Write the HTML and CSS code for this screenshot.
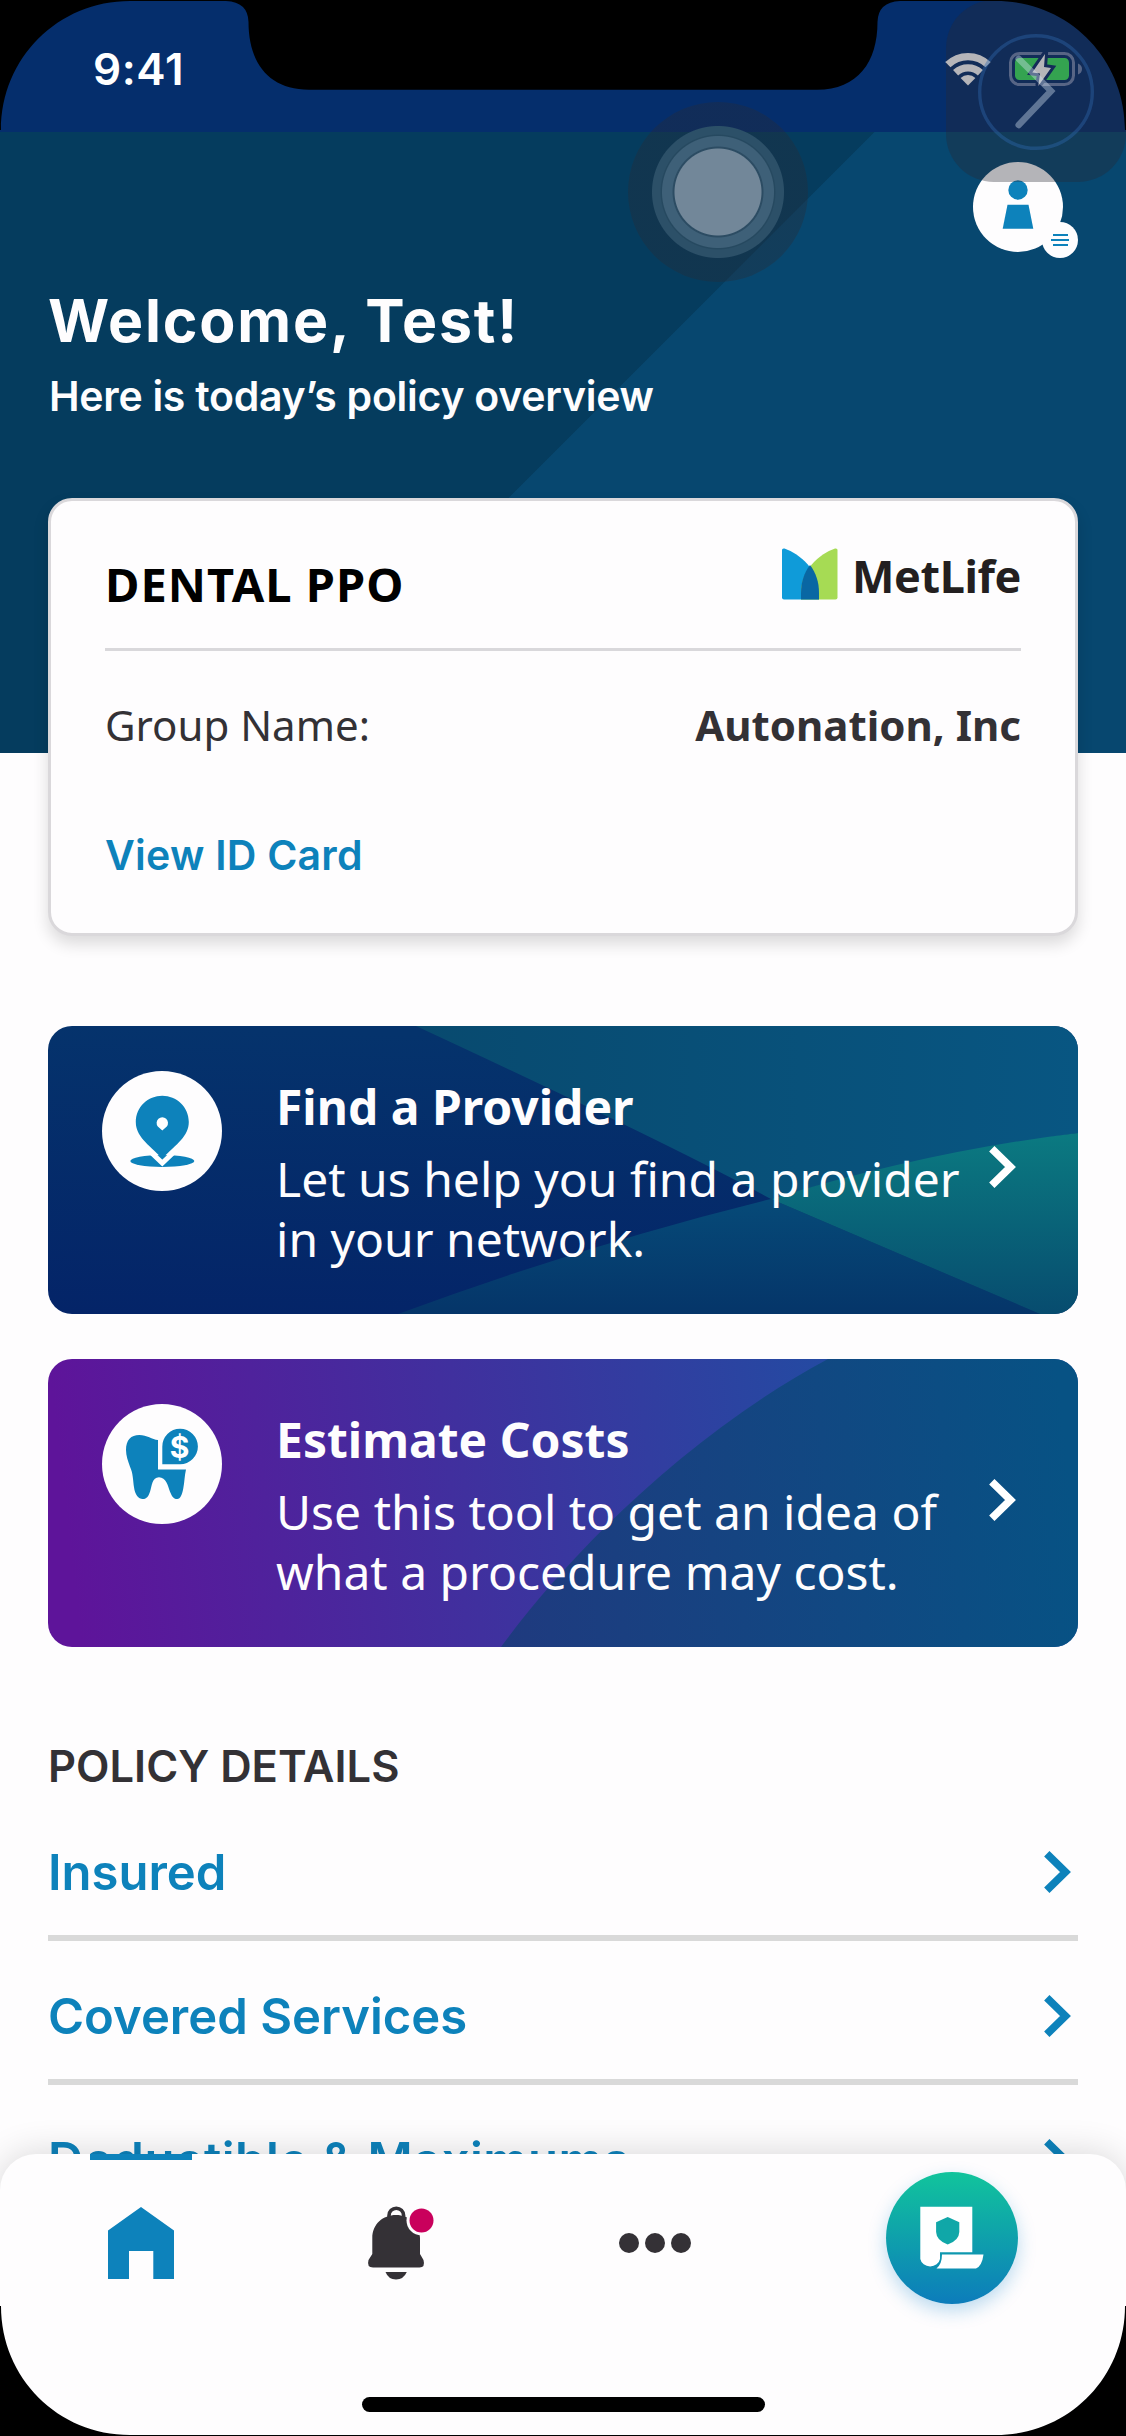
FILE: index.html
```html
<!DOCTYPE html>
<html lang="en">
<head>
  <meta charset="utf-8">
  <title>Policy overview</title>
  <link rel="stylesheet" href="styles.css">
</head>
<body>
  <div class="phone">
    <header class="status-bar">
      <span class="status-time">9:41</span>
      <div class="status-icons">
        <svg class="wifi" viewBox="0 0 46 34" width="46" height="34">
          <path d="M2.9 12.7A29 29 0 0 1 43.1 12.7M10.6 20.8A18 18 0 0 1 35.4 20.8" fill="none" stroke="#fff" stroke-width="7.4"/>
          <path d="M23 33.500L15.600 26A10.600 10.600 0 0 1 30.400 26Z" fill="#fff"/>
        </svg>
        <svg class="battery" viewBox="0 0 74 34" width="74" height="34">
          <rect x="1.500" y="1.500" width="63" height="31" rx="9" fill="none" stroke="#7085b0" stroke-width="3"/>
          <path d="M69 11.500q4 1.500 4 5.500t-4 5.500z" fill="#7085b0"/>
          <rect x="6" y="6" width="54" height="22" rx="4.500" fill="#3ae45f"/>
          <path d="M36 2L35 15L42 16L29.300 34L31 21.500L23.300 20.500Z" fill="#fff" stroke="#0a2d6b" stroke-width="6" paint-order="stroke"/>
        </svg>
      </div>
    </header>

    <main class="content">
      <div class="profile-row">
        <button class="avatar" aria-label="Profile">
          <svg viewBox="0 0 90 90" width="90" height="90">
            <circle cx="45" cy="28" r="9.700" fill="#0d82bb"/>
            <path d="M34.500 42.700H55.500L60.300 66.700H29.700Z" fill="#0d82bb"/>
          </svg>
          <span class="avatar-menu"><i></i><i class="wide"></i><i></i></span>
        </button>
      </div>
      <h1 class="welcome">Welcome, Test!</h1>
      <p class="subtitle">Here is today’s policy overview</p>

      <section class="policy-card">
        <div class="policy-head">
          <h2 class="plan-name">DENTAL PPO</h2>
          <div class="brand">
            <svg viewBox="0 0 56 52" width="56" height="52">
              <path d="M0 2Q0 0 2.500 0.500C18 6 37 22 37 45V51.500H2Q0 51.500 0 49.500Z" fill="#0f9bd9"/>
              <path d="M55.500 2Q55.500 0 53 0.500C37 6 19 22 19 45V51.500H53.500Q55.500 51.500 55.500 49.500Z" fill="#a6db54"/>
              <path d="M28 17C22 25 19 34 19 45V51.500H37V45C37 34 34 25 28 17Z" fill="#0967a3"/>
            </svg>
            <span>MetLife</span>
          </div>
        </div>
        <div class="group-row">
          <span>Group Name:</span>
          <strong>Autonation, Inc</strong>
        </div>
        <a class="id-link">View ID Card</a>
      </section>

      <section class="actions">
        <a class="action">
          <svg class="action-bg" viewBox="0 0 1030 288" width="1030" height="288">
            <defs>
              <linearGradient id="navy" x1="0" y1="1" x2="0.120" y2="0"><stop offset="0" stop-color="#042468"/><stop offset="1" stop-color="#05336c"/></linearGradient>
              <linearGradient id="sea" x1="0" y1="0" x2="1" y2="0"><stop offset="0" stop-color="#084a6f"/><stop offset="1" stop-color="#085682"/></linearGradient>
              <linearGradient id="deep" x1="0" y1="0" x2="0" y2="1"><stop offset="0" stop-color="#064a78"/><stop offset="1" stop-color="#053569"/></linearGradient>
              <linearGradient id="teal" x1="0" y1="0" x2="0" y2="1"><stop offset="0" stop-color="#0b7a81"/><stop offset="1" stop-color="#074c6f"/></linearGradient>
            </defs>
            <rect width="1030" height="288" fill="url(#navy)"/>
            <path d="M368 0H1030V107Q860 132 723 173Q620 117 368 0Z" fill="url(#sea)"/>
            <path d="M350 288Q540 218 723 173L992 288Z" fill="url(#deep)"/>
            <path d="M723 173Q880 125 1030 107V288H992Z" fill="url(#teal)"/>
          </svg>
          <span class="action-icon">
            <svg viewBox="0 0 120 120" width="120" height="120">
              <ellipse cx="60.300" cy="90" rx="32" ry="6" fill="#0d82bb"/>
              <path d="M60.300 24.800C74.500 24.800 86.800 36 86.800 51C86.800 65 75 73 60.300 87.300C45.500 73 33.800 65 33.800 51C33.800 36 46 24.800 60.300 24.800Z" fill="#0d82bb"/>
              <path d="M46 78.500L60.300 92L74.600 78.500" fill="none" stroke="#fff" stroke-width="5"/>
              <path d="M60.300 59.500L55.800 55.500A5.700 5.700 0 1 1 64.800 55.500Z" fill="#fff"/>
            </svg>
          </span>
          <span class="action-text">
            <strong>Find a Provider</strong>
            <span>Let us help you find a provider<br>in your network.</span>
          </span>
          <svg class="chevron" viewBox="0 0 28 42" width="28" height="42"><path d="M2.800 2.700L21.500 21L2.800 39.300" fill="none" stroke="#fff" stroke-width="7.600"/></svg>
        </a>
        <a class="action">
          <svg class="action-bg" viewBox="0 0 1030 288" width="1030" height="288">
            <defs>
              <linearGradient id="violet" gradientUnits="userSpaceOnUse" x1="0" y1="0" x2="780" y2="-90"><stop offset="0" stop-color="#5e149a"/><stop offset="1" stop-color="#234ba2"/></linearGradient>
              <linearGradient id="ocean" gradientUnits="userSpaceOnUse" x1="453" y1="260" x2="1030" y2="200"><stop offset="0" stop-color="#1f3a7f"/><stop offset="1" stop-color="#075284"/></linearGradient>
            </defs>
            <rect width="1030" height="288" fill="url(#violet)"/>
            <path d="M453 288C520 196 640 75 780 0H1030V288Z" fill="url(#ocean)"/>
          </svg>
          <span class="action-icon">
            <svg viewBox="0 0 120 120" width="120" height="120">
              <path d="M24 46C24 36 29 31 37.300 31C45 31 50 35.500 56 36V65.400H84C82.500 72 82.500 78 81.300 84.300C80 91 78.500 95 75.300 95C71 95 70 92 68 87.700C66 82 64 73.300 57 73.300C50 73.300 50 82 48 87.700C46.500 92 45 95 40.700 95C36.500 95 33 91 32 83.300C31 76 31 69 28 62.700C26 57 24 52 24 46Z" fill="#0d82bb"/>
              <path d="M60.300 60.300V42.700A17.800 17.800 0 1 1 78 60.300Z" fill="#0d82bb"/>
              <text class="coin" x="77.600" y="53.500" text-anchor="middle">$</text>
            </svg>
          </span>
          <span class="action-text">
            <strong>Estimate Costs</strong>
            <span>Use this tool to get an idea of<br>what a procedure may cost.</span>
          </span>
          <svg class="chevron" viewBox="0 0 28 42" width="28" height="42"><path d="M2.800 2.700L21.500 21L2.800 39.300" fill="none" stroke="#fff" stroke-width="7.600"/></svg>
        </a>
      </section>

      <section class="details">
        <h3>POLICY DETAILS</h3>
        <ul>
          <li><a>Insured</a><svg viewBox="0 0 28 42" width="28" height="42"><path d="M2.800 2.700L21.500 21L2.800 39.300" fill="none" stroke="#0d82bb" stroke-width="7.600"/></svg></li>
          <li><a>Covered Services</a><svg viewBox="0 0 28 42" width="28" height="42"><path d="M2.800 2.700L21.500 21L2.800 39.300" fill="none" stroke="#0d82bb" stroke-width="7.600"/></svg></li>
          <li><a class="deductible">Deductible &amp; Maximums</a><svg viewBox="0 0 28 42" width="28" height="42"><path d="M2.800 2.700L21.500 21L2.800 39.300" fill="none" stroke="#0d82bb" stroke-width="7.600"/></svg></li>
        </ul>
      </section>
    </main>

    <nav class="tab-bar">
      <div class="tabs">
        <a class="tab active" aria-label="Home">
          <svg viewBox="0 0 66 72" width="66" height="72"><path d="M33 0L66 23.500V72H45.300V44H21V72H0V23.500Z" fill="#0d82bb"/></svg>
        </a>
        <a class="tab" aria-label="Notifications">
          <svg class="bell" viewBox="0 0 68 74" width="68" height="74">
            <path d="M26 12V9.500A7.300 7.300 0 0 1 40.600 9.500V12" fill="none" stroke="#343136" stroke-width="3.600"/>
            <path d="M33 9C46 9 57 18 57 32V48L60.500 54Q62.500 61.500 56.500 61.500H10Q3.500 61.500 5.500 54L9.300 48V32C9.300 18 20 9 33 9Z" fill="#343136"/>
            <path d="M22.500 66H43.800Q40.500 73.500 33 73.500T22.500 66Z" fill="#343136"/>
            <circle cx="58.500" cy="14.500" r="15" fill="#fefdfe"/>
            <circle cx="58.500" cy="14.500" r="12" fill="#c9005c"/>
          </svg>
        </a>
        <a class="tab" aria-label="More">
          <svg viewBox="0 0 72 20" width="72" height="20" fill="#343136"><circle cx="10" cy="10" r="10"/><circle cx="36" cy="10" r="10"/><circle cx="62" cy="10" r="10"/></svg>
        </a>
        <a class="tab" aria-label="Policy">
          <span class="policy-button">
            <svg viewBox="0 0 64 64" width="64" height="64">
              <path d="M0.300 0.700H52.300V46.300H20V53A10 9 0 0 1 0.300 53Z" fill="#fff"/>
              <path d="M22 48.500H63.500Q62 60 56 62.500H16.500Q22 58 22 48.500Z" fill="#fff"/>
              <path d="M27.700 11L39.300 16.200V26Q39 34.500 27.700 38.500Q16.400 34.500 16.100 26V16.200Z" fill="#10a7a8"/>
            </svg>
          </span>
        </a>
      </div>
      <div class="home-indicator"></div>
    </nav>

    <div class="touch-pointer"></div>
    <div class="assistive">
      <svg viewBox="0 0 180 182" width="180" height="182">
        <circle cx="90" cy="92" r="56.300" fill="none" stroke="#2f6ab0" stroke-opacity="0.400" stroke-width="3.400"/>
        <path d="M72.700 58.700L105 91L72.700 125" fill="none" stroke="#d5e4f2" stroke-opacity="0.400" stroke-width="6.500" stroke-linecap="round"/>
      </svg>
    </div>

    <svg class="bezel" viewBox="0 0 1126 2436" width="1126" height="2436">
      <path fill="#000" fill-rule="evenodd" d="M0 0H1126V2436H0Z M130 1H226Q248 2 248.500 22C248.500 62 268 89.700 309 89.700H817C858 89.700 877.500 62 877.500 22Q878 2 900 1H996C1068 1 1125 58 1125 130H1126V2306H1125C1125 2378 1068 2435 996 2435H130C58 2435 1 2378 1 2306H0V130H1C1 58 58 1 130 1Z"/>
    </svg>
  </div>
</body>
</html>
```
FILE: styles.css
```css
* {
  box-sizing: border-box;
  margin: 0;
  padding: 0;
}

body {
  background: #000;
}

svg {
  display: block;
  flex: none;
}

.phone {
  position: relative;
  width: 1126px;
  height: 2436px;
  overflow: hidden;
  background: #fefdfe;
  color: #333135;
  font-family: Inter, "Liberation Sans", sans-serif;
}

/* Status bar */
.status-bar {
  display: flex;
  justify-content: space-between;
  align-items: flex-start;
  height: 132px;
  padding: 0 43px 0 93px;
  background: #052e6c;
}

.status-time {
  margin-top: 39px;
  font-size: 44px;
  font-weight: 600;
  line-height: 60px;
  letter-spacing: 0.6px;
  color: #fff;
}

.status-icons {
  display: flex;
  gap: 18px;
  margin-top: 52px;
}

/* Page content over the two-tone banner */
.content {
  padding: 30px 48px 0;
  background: linear-gradient(135deg, #053c5e 618px, #07476f 618.8px) no-repeat 0 0 / 100% 621px;
}

.profile-row {
  display: flex;
  justify-content: flex-end;
  padding-right: 15px;
}

.avatar {
  position: relative;
  width: 90px;
  height: 90px;
  border: 0;
  border-radius: 50%;
  background: #fefdfe;
}

.avatar-menu {
  position: absolute;
  right: -15px;
  bottom: -6px;
  display: flex;
  flex-direction: column;
  align-items: center;
  justify-content: center;
  gap: 3px;
  width: 36px;
  height: 36px;
  border-radius: 50%;
  background: #fefdfe;
}

.avatar-menu i {
  width: 15px;
  height: 2px;
  background: #0d82bb;
}

.avatar-menu .wide {
  width: 18px;
}

.welcome {
  margin-top: 33px;
  font-size: 59px;
  font-weight: 700;
  line-height: 72px;
  letter-spacing: 1.8px;
  color: #fefdfe;
}

.subtitle {
  margin-top: 14px;
  padding-left: 1px;
  font-size: 41px;
  font-weight: 600;
  line-height: 50px;
  letter-spacing: -0.27px;
  white-space: nowrap;
  color: #fefdfe;
}

/* Policy card */
.policy-card {
  height: 438px;
  margin-top: 77px;
  padding: 47px 54px 0;
  border: 3px solid #dad8db;
  border-radius: 24px;
  background: #fefdfe;
  box-shadow: 0 8px 16px rgba(0, 0, 0, 0.14);
}

.policy-head {
  display: flex;
  justify-content: space-between;
  align-items: flex-start;
  height: 103px;
  border-bottom: 3px solid #d9d8db;
}

.plan-name {
  margin-top: 4px;
  font-family: "Noto Sans", sans-serif;
  font-size: 47px;
  font-weight: 700;
  line-height: 64px;
  letter-spacing: 1px;
  color: #000;
}

.brand {
  display: flex;
  gap: 14px;
  color: #231f20;
  font-family: "Noto Sans", sans-serif;
  font-size: 45px;
  font-weight: 700;
  line-height: 55px;
  letter-spacing: -0.4px;
}

.group-row {
  display: flex;
  justify-content: space-between;
  margin-top: 45px;
  font-family: "Noto Sans", sans-serif;
  font-size: 42px;
  line-height: 58px;
}

.id-link {
  display: block;
  margin-top: 76px;
  font-size: 41px;
  font-weight: 600;
  line-height: 50px;
  letter-spacing: 0.24px;
  color: #0d82bb;
}

/* Action tiles */
.actions {
  display: grid;
  gap: 45px;
  margin-top: 90px;
}

.action {
  position: relative;
  display: flex;
  align-items: flex-start;
  height: 288px;
  padding: 45px 61px 0 54px;
  border-radius: 24px;
  overflow: hidden;
  color: #fefdfe;
  font-family: "Noto Sans", sans-serif;
  font-size: 48px;
}

.action-bg {
  position: absolute;
  inset: 0;
}

.action-icon {
  position: relative;
  flex: none;
  border-radius: 50%;
  background: #fefdfe;
}

.coin {
  font-family: Inter, sans-serif;
  font-size: 30px;
  font-weight: 700;
  fill: #fff;
}

.action-text {
  position: relative;
  display: flex;
  flex: 1;
  flex-direction: column;
  gap: 9px;
  margin: 3px 0 0 54px;
  line-height: 60px;
  white-space: nowrap;
}

.action-text strong {
  line-height: 66px;
}

.chevron {
  position: relative;
  margin-top: 75px;
}

/* Policy details list */
.details h3 {
  margin-top: 92px;
  font-size: 43.5px;
  font-weight: 600;
  line-height: 54px;
}

.details ul {
  margin-top: 4px;
  list-style: none;
}

.details li {
  display: flex;
  justify-content: space-between;
  align-items: center;
  height: 144px;
  padding: 12px 6px 0 0;
  border-bottom: 6px solid #d9d9d9;
  color: #0d82bb;
  font-size: 49px;
  font-weight: 600;
}

.details .deductible {
  letter-spacing: 0.48px;
}

/* Bottom tab bar */
.tab-bar {
  position: absolute;
  left: 0;
  right: 0;
  bottom: 0;
  height: 282px;
  border-radius: 36px 36px 0 0;
  background: #fefdfe;
  box-shadow: 0 0 36px rgba(0, 0, 0, 0.16);
}

.tabs {
  display: grid;
  grid-template-columns: 282px 229px 287px 308px;
  align-items: center;
  height: 177px;
}

.tab {
  position: relative;
  display: flex;
  justify-content: center;
}

.tab.active {
  align-items: center;
  height: 177px;
}

.tab.active::before {
  content: "";
  position: absolute;
  top: 0;
  left: 90px;
  width: 102px;
  height: 6px;
  background: #0d82bb;
}

.bell {
  overflow: visible;
}

.policy-button {
  display: flex;
  width: 132px;
  height: 132px;
  margin-top: -10px;
  padding: 34px;
  border-radius: 50%;
  background: linear-gradient(#11c49c, #0c7cbb);
  box-shadow: 0 7px 18px rgba(13, 130, 200, 0.28);
}

.home-indicator {
  width: 403px;
  height: 15px;
  margin: 66px auto 0;
  border-radius: 8px;
  background: #000;
}

/* Touch overlays */
.touch-pointer {
  position: absolute;
  left: 628px;
  top: 102px;
  width: 180px;
  height: 180px;
  border-radius: 50%;
  background: radial-gradient(circle, #728799 43px, #2c4c63 44px, #2c4c63 45px, #3e6078 46px, #3e6078 55.5px, #264960 56.5px, #264960 57px, #2c5068 58px, #2c5068 65.5px, rgba(40, 42, 52, 0.344) 66.5px);
}

.assistive {
  position: absolute;
  left: 946px;
  top: 0;
  width: 180px;
  height: 182px;
  border-radius: 48px;
  background: rgba(40, 42, 52, 0.344);
}

.bezel {
  position: absolute;
  inset: 0;
  pointer-events: none;
}
```
